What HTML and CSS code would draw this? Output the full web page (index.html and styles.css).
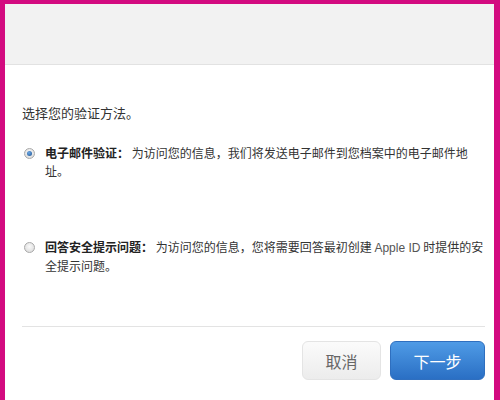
FILE: index.html
```html
<!DOCTYPE html>
<html lang="zh-CN">
<head>
<meta charset="utf-8">
<title>选择验证方法</title>
<link rel="stylesheet" href="styles.css">
</head>
<body>
<div class="frame">
  <div class="header"></div>
  <div class="content">
    <p class="heading">选择您的验证方法。</p>
    <div class="option">
      <span class="radio checked"></span>
      <p class="desc"><b>电子邮件验证：</b> 为访问您的信息，我们将发送电子邮件到您档案中的电子邮件地<br>址。</p>
    </div>
    <div class="option second">
      <span class="radio"></span>
      <p class="desc"><b>回答安全提示问题：</b> 为访问您的信息，您将需要回答最初创建 <span class="latin">Apple ID</span> 时提供的安<br>全提示问题。</p>
    </div>
    <div class="divider"></div>
    <div class="actions">
      <button class="btn cancel">取消</button>
      <button class="btn next">下一步</button>
    </div>
  </div>
</div>
</body>
</html>
```
FILE: styles.css
```css
html, body {
  margin: 0;
  padding: 0;
  height: 100%;
  background: #d30b80;
}
body {
  font-family: "Noto Sans CJK SC", "Noto Sans", sans-serif;
  color: #333;
}
.frame {
  box-sizing: border-box;
  height: 400px;
  margin: 4px 6px 0 5px;
  background: #fff;
  display: flex;
  flex-direction: column;
}
.header {
  height: 60px;
  background: #f2f2f2;
  border-bottom: 1px solid #e2e2e2;
  flex: none;
}
.content {
  padding: 0 9px 0 17px;
}
.heading {
  margin: 39px 0 0 0;
  font-size: 13px;
  line-height: 18px;
  color: #333;
}
.option {
  display: flex;
  align-items: flex-start;
  margin-top: 22px;
  padding-left: 2px;
}
.option.second {
  margin-top: 58px;
}
.radio {
  flex: none;
  width: 9px;
  height: 9px;
  margin-top: 4px;
  border-radius: 50%;
  border: 1px solid #a9a9a9;
  background: radial-gradient(circle at 50% 40%, #fafafa, #d6d6d6);
  box-sizing: content-box;
  display: flex;
  align-items: center;
  justify-content: center;
}
.radio.checked::after {
  content: "";
  width: 5px;
  height: 5px;
  border-radius: 50%;
  background: radial-gradient(circle at 40% 35%, #6aa8e6, #1c4f8c);
}
.desc {
  margin: 0 0 0 10px;
  font-size: 12px;
  line-height: 18px;
  color: #333;
  white-space: nowrap;
}
.desc b {
  color: #222;
}
.latin {
  font-family: "Liberation Sans", Arial, sans-serif;
  color: #555;
}
.divider {
  margin-top: 51px;
  height: 1px;
  background: #e3e3e3;
}
.actions {
  display: flex;
  justify-content: flex-end;
  gap: 9px;
  margin-top: 14px;
}
.btn {
  height: 39px;
  border-radius: 6px;
  font-family: "Noto Sans CJK SC", sans-serif;
  font-size: 16px;
  padding: 0;
  cursor: pointer;
}
.cancel {
  width: 79px;
  border: 1px solid #e4e4e4;
  background: linear-gradient(#fbfbfb, #ececec);
  color: #666;
}
.next {
  width: 95px;
  border: 1px solid #2f6fbf;
  background: linear-gradient(#4f9be6, #2a6fc4);
  color: #fff;
}
```
